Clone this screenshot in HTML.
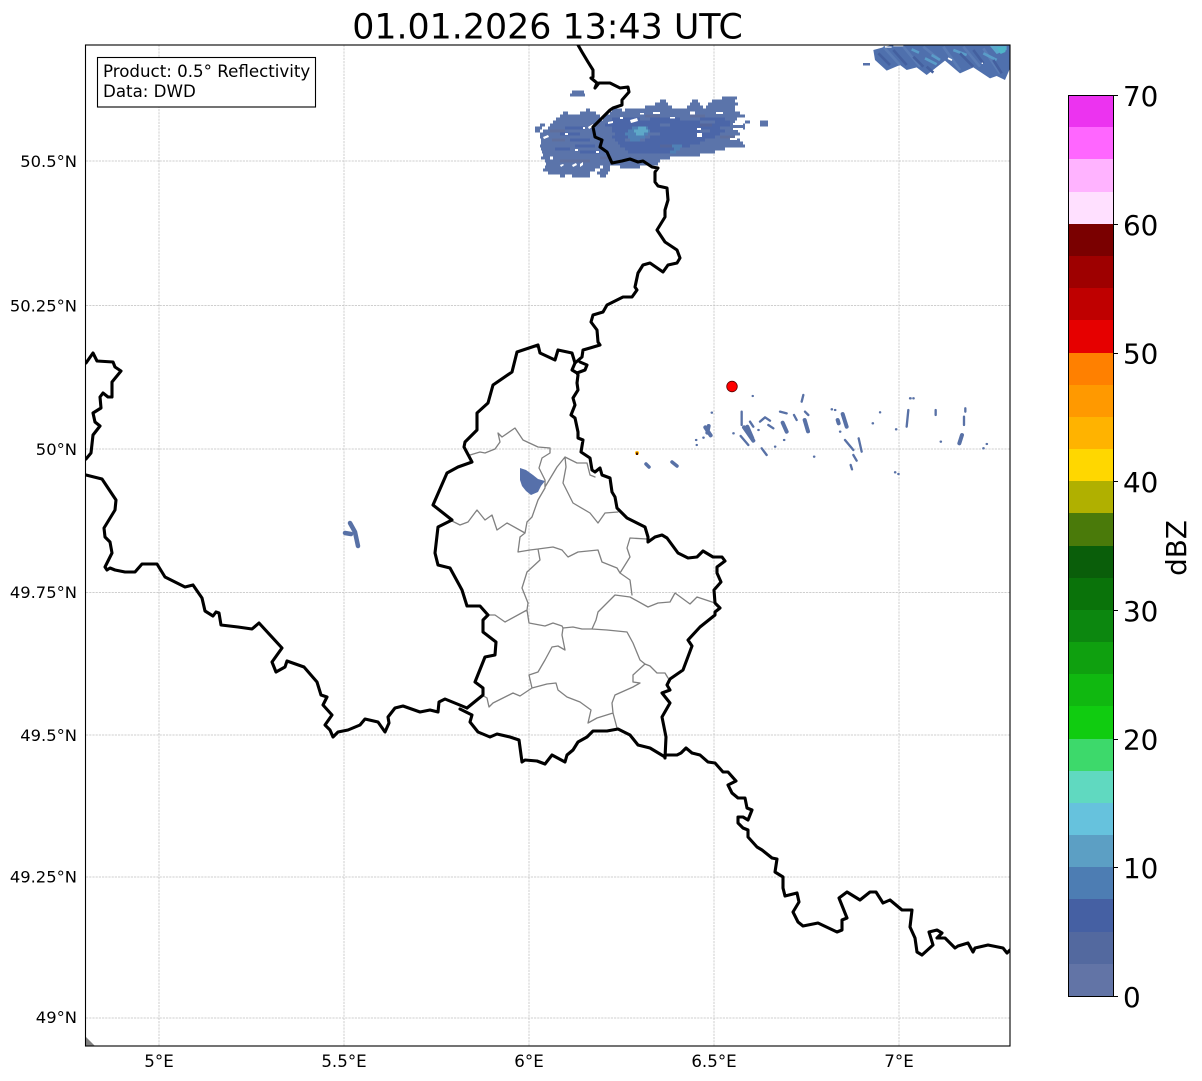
<!DOCTYPE html>
<html><head><meta charset="utf-8"><style>
html,body{margin:0;padding:0;background:#fff}
svg{display:block}
text{font-family:"DejaVu Sans","Liberation Sans",sans-serif;fill:#000}
.t{font-size:16.67px}
.y{font-size:16.35px}
.c{font-size:27.78px}
.g{stroke:#c0c0c0;stroke-width:.75;stroke-dasharray:2.2 1;fill:none}
.b{fill:none;stroke:#000;stroke-width:3.1;stroke-linejoin:round;stroke-linecap:round}
.m{fill:none;stroke:#808080;stroke-width:1.3;stroke-linejoin:round;stroke-linecap:round}
.r{fill:none;stroke:#5871a6;stroke-linecap:round;stroke-linejoin:round}
.s{fill:none;stroke-width:3;stroke-linecap:butt}
</style></head><body>
<svg width="1202" height="1081" viewBox="0 0 1202 1081" xmlns="http://www.w3.org/2000/svg">
<rect width="1202" height="1081" fill="#fff"/>
<text x="547.500" y="38.500" text-anchor="middle" style="font-size:34.8px">01.01.2026 13:43 UTC</text>

<!-- grid -->
<path class="g" d="M159 45V1046M344 45V1046M529 45V1046M714 45V1046M899 45V1046M86 161H1010M86 305.500H1010M86 449H1010M86 592.500H1010M86 735H1010M86 877H1010M86 1018H1010"/>

<clipPath id="ax"><rect x="85.500" y="45" width="924.500" height="1001"/></clipPath>
<g clip-path="url(#ax)">
<path d="M86 1037L95 1046H86Z" fill="#808080"/>

<!-- north radar blob as pixel rows -->
<path class="s" stroke="#5b74aa" d="M722 98H737M712 101H735M692 101H698M660 101H666M655 104H668M690 104H700M708 104H738M645 107H672M687 107H703M706 107H735M586 110H590M612 110H622M625 110H735M563 113H568M580 113H596M610 113H690M695 113H740M560 116H600M605 116H745M556 119H600M603 119H737M553 122H735M745 122H750M540 125H545M550 125H745M760 125H768M535 128H542M548 128H745M535 131H540M543 131H738M540 134H740M540 137H735M541 140H740M541 143H743M540 146H745M541 149H725M542 152H715M543 155H700M541 158H550M553 158H670M545 161H660M546 164H658M545 167H600M603 167H610M620 167H640M543 170H595M600 170H610M548 173H590M597 173H608M560 176H565M572 176H590M600 176H606"/>
<path class="s" stroke="#5b74aa" d="M572 92H584M570 95H585M760 122H768"/>
<path class="s" stroke="#4b66a8" d="M612 119H640M650 119H680M700 119H725M610 122H700M715 122H730M605 125H660M670 125H730M612 128H720M612 131H635M650 131H700M710 131H725M615 134H630M660 134H720M612 137H628M650 137H715M615 140H625M645 140H705M618 143H700M620 146H690M625 149H680M628 152H670M565 128H585M560 134H580M570 140H590M575 146H595M555 149H570M580 152H600"/>
<path class="s" stroke="#668" stroke-opacity=".35" d="M550 131H565M590 125H600M552 140H565M560 161H590M600 158H612M645 116H660M690 116H705M720 137H735M660 146H672M700 125H712"/>
<path class="s" stroke="#4f80b5" d="M632 128H648M628 131H650M625 134H648M628 137H645M630 140H640M672 146H682M674 149H680M670 152H676"/>
<path class="s" stroke="#5ea8c8" d="M638 128H646M634 131H648M636 134H644"/>
<path fill="#fff" d="M697 133h5v4h-5ZM630 120l7-2 1 3-7 2ZM588 127l5-3 1 2-5 3ZM572 165l4-2 1 2-4 2ZM543 137l5-2 1 2-5 2ZM716 112h7v2h-7ZM733 123h10v2H733ZM733 128h10v2H733ZM730 138h7v2h-7ZM697 128h4v2h-4ZM653 112h7v2h-7ZM608 122l5-1v2l-5 1ZM620 117h3v2h-3ZM580 164l3-2v3l-3 2ZM560 165l3-1 1 1-3 2ZM583 127h2v2h-2ZM565 133h3v2h-3ZM575 149h3v2h-3ZM596 151h3v2h-3ZM670 117h5v1.500h-5ZM640 113h4v1.500h-4Z"/>

<!-- NE radar blob -->
<g transform="translate(850 40) scale(.33333)">
<path fill="#4f70ad" d="M70 30L125 15 480 15V85L465 120 440 108 420 115 370 82 330 100 285 62 230 105 200 82 170 90 150 75 110 92 75 60Z"/>
<g fill="none" stroke-width="8">
<path stroke="#5a7cb5" d="M100 20l50 55M160 20l50 60M220 20l50 40M280 20l50 70M340 20l50 60M400 25l50 75"/>
<path stroke="#5a9cc8" d="M225 55l35 18M185 28l22 10M310 30l40 15M400 40l40 20M245 45l25 15"/>
<path stroke="#44609f" d="M85 40l35 35M130 30l40 45M330 40l40 40M230 80l20 18M370 30l30 40M430 60l25 40M190 50l30 30"/>
</g>
<path fill="#5aa8cc" d="M420 18h50v12l-30 12Z"/>
<path fill="#4fb5c8" d="M440 22l28-2 -2 16-14 6Z"/>
<path fill="#fff" d="M295 52l12 6-2 5-12-6ZM105 20h20v3h-20ZM130 15h30v4h-30ZM395 68h4v4h-4Z"/>
</g>
<path fill="#5670aa" d="M863 63h7v2.500h-7Z"/>

<!-- scattered echoes (zoom 5 coords) -->
<g transform="translate(690 370) scale(.33333)">
<path class="r" stroke-width="12" d="M46 172L62 196M56 168L52 188M162 172L190 212M172 170L187 205M278 158L290 185M344 150L354 184M458 132L470 170M443 150L446 160M816 195L808 220"/>
<path class="r" stroke-width="7" d="M155 125V165M152 198L175 225M215 235L230 255M210 155L225 142 240 152M235 165L250 175M270 125L290 130M312 135L320 150M340 75L335 95M345 125L355 135M465 210L490 240M506 205L515 245M490 255L500 272M482 285L486 298M655 120L650 170M737 120V135M826 115V125M822 140V165M180 155L190 170M660 85H662M670 85H671"/>
<path class="r" stroke-width="7" d="M65 128h1M18 210h1M40 203h1M20 225h.5M372 260h1M570 127h.5M548 160h1M618 178h1M615 307h1M625 312h1M752 215h1M880 235h1M890 222h1M282 210h1M255 230h1M425 118h1M435 120h1M450 185h1M188 78h.5M130 190h1M205 180h1"/>
</g>

<!-- small blobs -->
<path fill="#5670aa" d="M520 468L526 470 533 475 538 479 545 481 541 486 538 492 531 495 526 491 522 486 520 480Z"/>
<path class="r" stroke-width="4.500" d="M350 523L355 532 358 546M345 533L351 534"/>
<path class="r" stroke-width="3.500" d="M646 464L649 467M672 462L677 466"/>
<circle cx="637" cy="453" r="2" fill="#ffb300"/><rect x="636" y="452.500" width="2" height="2.500" fill="#401000"/>

<!-- regional borders -->
<path class="m" d="M470 455L480 452 485 453 495 449 500 442 498 433 502 437 515 428 523 440 538 447 550 448 550 453 542 458 539 468 545 480 545 488 538 500 532 517 527 522 525 533 520 537 518 552 530 550 538 549 553 547 562 550 568 557 578 552 598 550 602 562 617 568 620 573 630 580 632 595M450 520L460 525 468 522 477 510 485 520 492 515 497 530 507 523 525 533M545 487L557 467 565 457 566 467 563 483 573 503 590 513 598 523 605 513 618 512M565 457L577 463 587 463 590 475 595 477M647 539L630 538 627 548 630 557 620 573M538 549L540 560 527 572 522 588 528 603 527 610 529 623 545 626 553 623 562 626 563 628 573 627 582 629 592 629 607 630 627 632 633 643 640 660 645 664 633 675 633 682 640 683 633 687 615 695 612 703 613 713 617 728M488 615L495 615 505 622 527 610M592 629L596 620 598 612 607 603 615 595 630 597 648 607 658 603 670 602 675 593 690 604 697 597 715 603M645 664L650 666 657 673 665 673 668 678M563 628L562 635 565 650 558 646 552 647 545 660 538 672 529 675 532 688M482 695L487 698 489 707 493 703 513 693 520 696 532 688 547 684 556 683 558 690 567 697 580 702 591 710 588 723 597 718 613 713"/>

<!-- national borders -->
<path class="b" d="M578 45L582 52 588 62 593 70 593 77 591 78 597 83 595 88 599 83 610 83 620 88 628 87 629 92 622 100 622 105 613 108 610 110 593 127 595 137 602 140 600 147 607 152 612 163 622 161 630 159 638 162 643 161 652 167 658 168 655 172 655 182 658 186 667 188 668 200 665 210 665 217 657 230 665 242 677 250 680 258 677 263 668 265 663 272 650 263 643 265 638 273 635 287 637 290 632 297 623 297 607 305 603 312 593 315 591 322 597 330 598 342 600 345 590 348 583 350 582 357 575 363 572 370 577 373 585 370 587 365 580 362M578 375L577 383 578 390 573 398 575 405 571 415 575 418 578 432 578 438 583 440 581 452 590 458 592 470 595 472 600 468 602 475 610 478 612 492 615 497 617 508 627 518 635 522 645 527 648 537 648 542 655 537 662 535 667 538 678 553 688 558 697 557 703 551 713 557 722 557 725 561 717 567 717 573 721 582 714 590 715 603 720 608 715 612 715 615 700 627 688 640 692 646 683 670 670 679 667 685 670 690 662 693 670 703 662 717 666 737 665 758M577 373L578 375"/>
<path class="b" d="M665 757L650 748 638 745 630 735 618 729 607 731 593 731 587 737 578 742 573 750 567 755 565 762 552 755 545 764 537 761 525 760 522 762 519 740 510 737 497 734 490 737 478 732 470 722 472 715 466 712 460 709"/>
<path class="b" d="M467 708L483 695 483 688 475 682 485 657 495 655 496 642 483 632 483 620 488 615 480 606 467 606 462 590 450 568 438 565 435 553 438 527 452 520 433 505 447 473 458 467 472 462 464 447 465 442 477 430 477 413 488 403 493 385 512 372 517 352 538 345 540 353 555 360 558 350 572 353 575 363"/>
<path class="b" d="M467 708L445 699 439 702 438 712 430 710 420 712 403 706 395 708 388 717 389 723 385 732 378 722 365 719 360 725 348 730 338 732 333 737 330 730 325 725 332 715 323 705 327 697 321 695 317 682 304 667 287 661 285 667 276 672 272 662 282 648 259 623 252 629 238 627 221 625 219 613 216 612 213 616 205 611 202 598 193 585 185 587 165 577 157 564 142 564 135 572 125 572 115 570 110 568 107 570 105 567 112 553 110 542 105 537 104 528 115 510 116 500 102 479 86 475"/>
<path class="b" d="M86 363L93 353 97 361 113 362 115 367 121 371 112 382 112 397 108 397 103 393 100 397 101 408 93 413 95 422 100 426 93 435 91 453 86 459"/>
<path class="b" d="M665 755L677 755 681 753 686 748 692 753 700 755 708 762 715 763 723 772 728 772 736 781 728 785 732 793 738 798 745 798 747 808 752 810 748 820 743 817 738 817 738 823 743 828 748 830 748 837 757 847 762 850 772 858 777 859 775 872 783 877 783 888 785 896 797 893 799 902 793 912 798 922 803 926 818 923 837 932 842 930 842 920 847 918 843 908 839 898 847 892 860 900 870 892 876 892 883 903 890 900 902 910 912 910 910 927 915 938 917 952 922 955 933 945 929 932 937 930 942 933 937 938 945 938 955 948 958 946 968 943 973 952 975 948 988 945 1003 948 1007 953 1010 950"/>

<circle cx="732" cy="386.500" r="5.300" fill="#f00" stroke="#5a0000" stroke-width=".8"/>
</g>

<rect x="85.500" y="45" width="924.500" height="1001" fill="none" stroke="#000" stroke-width="1.100"/>

<!-- legend -->
<rect x="97.500" y="57.500" width="218" height="49.500" fill="#fff" stroke="#000" stroke-width="1.100"/>
<text class="t" x="103" y="77">Product: 0.5° Reflectivity</text>
<text class="t" x="103" y="97">Data: DWD</text>

<!-- axis labels -->
<g text-anchor="end">
<text class="y" x="77" y="167">50.5°N</text>
<text class="y" x="77" y="311.500">50.25°N</text>
<text class="y" x="77" y="455">50°N</text>
<text class="y" x="77" y="598">49.75°N</text>
<text class="y" x="77" y="741">49.5°N</text>
<text class="y" x="77" y="882.500">49.25°N</text>
<text class="y" x="77" y="1023">49°N</text>
</g>
<g text-anchor="middle">
<text class="t" x="159" y="1067">5°E</text>
<text class="t" x="344" y="1067">5.5°E</text>
<text class="t" x="529" y="1067">6°E</text>
<text class="t" x="714" y="1067">6.5°E</text>
<text class="t" x="899" y="1067">7°E</text>
</g>

<!-- colorbar -->
<g shape-rendering="crispEdges">
<rect x="1068" y="95" width="45" height="33" fill="#ec33f0"/>
<rect x="1068" y="127" width="45" height="33" fill="#ff66ff"/>
<rect x="1068" y="159" width="45" height="33" fill="#ffb3ff"/>
<rect x="1068" y="192" width="45" height="33" fill="#ffe0ff"/>
<rect x="1068" y="224" width="45" height="33" fill="#7a0000"/>
<rect x="1068" y="256" width="45" height="33" fill="#9e0000"/>
<rect x="1068" y="288" width="45" height="33" fill="#bf0000"/>
<rect x="1068" y="320" width="45" height="33" fill="#e60000"/>
<rect x="1068" y="353" width="45" height="33" fill="#ff8000"/>
<rect x="1068" y="385" width="45" height="33" fill="#ff9900"/>
<rect x="1068" y="417" width="45" height="33" fill="#ffb300"/>
<rect x="1068" y="449" width="45" height="33" fill="#ffd700"/>
<rect x="1068" y="481" width="45" height="33" fill="#b0b000"/>
<rect x="1068" y="513" width="45" height="33" fill="#4a7a0a"/>
<rect x="1068" y="546" width="45" height="33" fill="#0a5e0a"/>
<rect x="1068" y="578" width="45" height="33" fill="#0a730a"/>
<rect x="1068" y="610" width="45" height="33" fill="#0c870f"/>
<rect x="1068" y="642" width="45" height="33" fill="#0fa00f"/>
<rect x="1068" y="674" width="45" height="33" fill="#10b810"/>
<rect x="1068" y="706" width="45" height="33" fill="#10cc10"/>
<rect x="1068" y="739" width="45" height="33" fill="#3dd96b"/>
<rect x="1068" y="771" width="45" height="33" fill="#60d9c0"/>
<rect x="1068" y="803" width="45" height="33" fill="#66c2dd"/>
<rect x="1068" y="835" width="45" height="33" fill="#5c9fc4"/>
<rect x="1068" y="867" width="45" height="33" fill="#4d7db3"/>
<rect x="1068" y="899" width="45" height="33" fill="#4560a3"/>
<rect x="1068" y="932" width="45" height="33" fill="#53699f"/>
<rect x="1068" y="964" width="45" height="32" fill="#6274a6"/>
</g>
<rect x="1068.500" y="95.500" width="45" height="901" fill="none" stroke="#000" stroke-width="1"/>
<path d="M1113 95.500h5M1113 224.500h5M1113 353.500h5M1113 481.500h5M1113 610.500h5M1113 739.500h5M1113 867.500h5M1113 996.500h5" stroke="#000" stroke-width="1"/>
<g>
<text class="c" x="1123" y="106">70</text>
<text class="c" x="1123" y="235">60</text>
<text class="c" x="1123" y="363.500">50</text>
<text class="c" x="1123" y="492">40</text>
<text class="c" x="1123" y="621">30</text>
<text class="c" x="1123" y="749.500">20</text>
<text class="c" x="1123" y="878">10</text>
<text class="c" x="1123" y="1007">0</text>
</g>
<text class="c" text-anchor="middle" transform="translate(1186 548) rotate(-90)">dBZ</text>
</svg>
</body></html>
